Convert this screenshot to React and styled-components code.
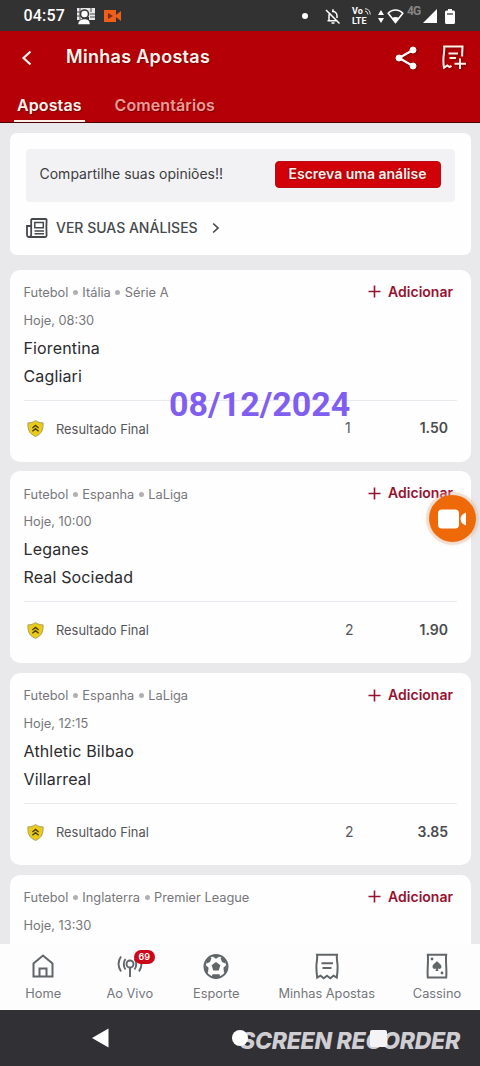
import React from 'react';
import styled, { createGlobalStyle, css } from 'styled-components';

const Global = createGlobalStyle`
  * { box-sizing: border-box; }
  html, body { margin: 0; padding: 0; }
  body { font-family: Inter, "Liberation Sans", sans-serif; background: #e9e8ea; overflow: hidden; }
  svg { display: block; flex: none; }
`;

const Screen = styled.div`
  position: relative;
  width: 480px;
  height: 1066px;
  display: flex;
  flex-direction: column;
  overflow: hidden;
  background: #e9e8ea;
`;

const StatusBar = styled.div`
  flex: none;
  height: 31px;
  padding: 1px 25px 0 23.5px;
  display: flex;
  align-items: center;
  background: #323232;
  color: #fff;
`;

const Clock = styled.span`
  font: 500 16px/30px Roboto, sans-serif;
  letter-spacing: 0.2px;
  width: 45px;
`;

const StatusLeft = styled.div`
  display: flex;
  align-items: center;
  gap: 8px;
  flex: 1;
`;

const StatusRight = styled.div`
  display: flex;
  align-items: center;
`;

const Dot = styled.i`
  width: 6px;
  height: 6px;
  border-radius: 50%;
  background: #fff;
  margin-right: 17px;
`;

const Volte = styled.div`
  margin: 0 7px 0 11px;
  width: 19px;
  font: 700 9px/10px Roboto, sans-serif;
  white-space: nowrap;
`;

const VoRow = styled.div`
  display: flex;
  align-items: center;
  gap: 1px;
`;

const NetType = styled.span`
  font: 700 12px/12px "Roboto", sans-serif;
  color: #858585;
  margin: -10px 2px 0 3px;
  width: 14px;
  letter-spacing: -0.8px;
`;

const BatteryWrap = styled.span`
  margin-left: 8px;
`;

const Header = styled.header`
  flex: none;
  height: 92px;
  background: #b40006;
  border-bottom: 1px solid #4c0003;
  color: #fff3ec;
  display: flex;
  flex-direction: column;
  text-shadow: 1px 1px 1px rgba(70, 0, 0, 0.6);
`;

const TitleRow = styled.div`
  height: 53px;
  padding: 0 14px 0 21px;
  display: flex;
  align-items: center;
`;

const Title = styled.h1`
  flex: 1;
  margin: -1px 0 0 33px;
  font-size: 18px;
  line-height: 24px;
  font-weight: 600;
  letter-spacing: 0.3px;
`;

const HeaderIcons = styled.div`
  display: flex;
  align-items: center;
  gap: 25px;
  filter: drop-shadow(1px 1px 1px rgba(70, 0, 0, 0.5));
`;

const Tabs = styled.nav`
  flex: 1;
  display: flex;
  gap: 27px;
  padding-left: 14px;
`;

const Tab = styled.div`
  height: 38px;
  padding: 0 3px;
  font-size: 16px;
  line-height: 42px;
  font-weight: 600;
  letter-spacing: 0.1px;
  color: ${(p) => (p.$active ? '#fff3ec' : '#f09a98')};
  border-bottom: 2px solid ${(p) => (p.$active ? '#fbeee6' : 'transparent')};
`;

const Feed = styled.main`
  flex: 1;
  min-height: 0;
  overflow: hidden;
  padding: 10px 9px 0 9.5px;
`;

const cardBase = css`
  background: #fefefe;
  border-radius: 10px;
`;

const PromoCard = styled.section`
  ${cardBase}
  border-radius: 7px;
  height: 122px;
  padding: 15.5px 16px 0;
  margin-bottom: 14.5px;
`;

const PromoBox = styled.div`
  height: 53.5px;
  border-radius: 4px;
  background: #f2f2f4;
  display: flex;
  align-items: center;
  justify-content: space-between;
  padding: 0 14px;
`;

const PromoText = styled.span`
  font-size: 14px;
  line-height: 20px;
  margin-top: -3px;
  color: #3c3c3f;
`;

const WriteButton = styled.button`
  width: 166px;
  height: 27px;
  margin-top: -2px;
  padding: 0 1px 1px 0;
  border: 1px solid #b80d16;
  border-radius: 4px;
  background: #d10009;
  color: #ffeeea;
  font: 600 14px/22px Inter, sans-serif;
  text-shadow: 0 0 2px rgba(90, 0, 0, 0.8);
`;

const ReviewsLink = styled.div`
  height: 52px;
  padding-left: 0.5px;
  display: flex;
  align-items: center;
  color: #46484b;
`;

const ReviewsLabel = styled.span`
  font-size: 14px;
  line-height: 20px;
  font-weight: 500;
  margin: -1px 14px 0 8px;
`;

const BetCard = styled.section`
  ${cardBase}
  height: 192px;
  margin-bottom: 9.7px;
  padding: 9px 14px 0;
  display: flex;
  flex-direction: column;
`;

const TopRow = styled.div`
  display: flex;
  align-items: center;
  justify-content: space-between;
  height: 28px;
  padding-right: 4px;
`;

const Crumbs = styled.div`
  display: flex;
  align-items: center;
  gap: 4.5px;
  font-size: 12.8px;
  color: #77777b;
`;

const Bullet = styled.i`
  width: 5px;
  height: 5px;
  border-radius: 50%;
  background: #b0b0b3;
`;

const AddLink = styled.div`
  display: flex;
  align-items: center;
  gap: 7px;
  margin-top: -1.5px;
  font-size: 14px;
  line-height: 20px;
  font-weight: 600;
  color: #991130;
`;

const Kickoff = styled.div`
  font-size: 12.8px;
  line-height: 28.5px;
  height: 27.3px;
  color: #77777b;
`;

const Team = styled.div`
  font-size: 16px;
  line-height: 28px;
  letter-spacing: 0.15px;
  color: #2b2b2e;
`;

const Divider = styled.hr`
  width: 100%;
  height: 1px;
  margin: 10px 0 0;
  border: 0;
  background: #e9e9ef;
`;

const ResultRow = styled.div`
  display: flex;
  align-items: center;
  height: 56px;
  color: #55565a;
  font-size: 12.9px;
`;

const ShieldWrap = styled.span`
  margin: 0 0 0 3px;
`;

const Market = styled.span`
  flex: 1;
  margin: 0.5px 0 0 12.5px;
`;

const Pick = styled.span`
  width: 26px;
  font-size: 14px;
  margin-top: -2px;
`;

const Odd = styled.span`
  width: 86px;
  padding-right: 9px;
  text-align: right;
  font-size: 14px;
  font-weight: 600;
  margin-top: -2px;
  color: #4a4b4f;
`;

const BottomNav = styled.nav`
  flex: none;
  height: 66px;
  background: #fdfdfe;
  display: grid;
  grid-template-columns: 86.5px 86.5px 86.5px 134.5px 86px;
`;

const NavItem = styled.div`
  display: flex;
  flex-direction: column;
  align-items: center;
  padding-top: 8px;
  font-size: 12.8px;
  line-height: 20px;
  color: #75767a;
`;

const NavGlyph = styled.div`
  position: relative;
  height: 32px;
  color: #616669;
`;

const Badge = styled.span`
  position: absolute;
  left: 17px;
  top: -2px;
  width: 21px;
  height: 14px;
  border-radius: 7px;
  background: #cb0818;
  color: #fff;
  font-size: 9px;
  line-height: 14px;
  font-weight: 600;
  text-align: center;
`;

const SystemNav = styled.div`
  position: relative;
  flex: none;
  height: 56px;
  background: #313035;
  display: flex;
  align-items: center;
  padding: 0 93px 0 91px;
  justify-content: space-between;
`;

const Watermark = styled.div`
  position: absolute;
  left: 240px;
  top: 16px;
  font: italic 800 23px/30px Inter, sans-serif;
  letter-spacing: -0.28px;
  color: #cfced2;
  white-space: nowrap;
`;

const SystemHome = styled.i`
  position: relative;
  width: 16px;
  height: 16px;
  border-radius: 50%;
  background: #fff;
`;

const SystemRecent = styled.i`
  position: relative;
  width: 17px;
  height: 17px;
  border-radius: 2px;
  background: #f4f4f6;
`;

const DateStamp = styled.div`
  position: absolute;
  left: 169px;
  top: 383px;
  font: 700 34px/42px Roboto, sans-serif;
  color: #805ff0;
`;

const RecordBubble = styled.div`
  position: absolute;
  left: 429px;
  top: 495px;
  width: 47px;
  height: 47px;
  border-radius: 50%;
  background: #ee6a08;
  box-shadow: 0 0 0 3px rgba(225, 190, 170, 0.35), 0 0 4px 2px rgba(225, 170, 130, 0.3);
  display: flex;
  align-items: center;
  padding-left: 9px;
`;

const PortraitIcon = () => (
  <svg width="18" height="17" viewBox="0 0 18 17">
    <path d="M0 0h18v12h-6V9H5v3H0z" fill="#e8e8e8" />
    <path d="M3 0v12M0 4h4M0 8h4M13 6h5M13 9h5M14 0v4" stroke="#4a4a4a" strokeWidth="1" />
    <circle cx="7.500" cy="6" r="4" fill="#fff" stroke="#3a3a3a" strokeWidth="1.600" />
    <path d="M1 16.500c0-4 3-5.500 6.500-5.500s5.500 1.500 5.500 5.500z" fill="#fff" stroke="#3a3a3a" strokeWidth=".6" />
  </svg>
);

const CamMini = () => (
  <svg width="19" height="14" viewBox="0 0 19 14">
    <path d="M1 1h12v12H1zM13 6l5-4v10l-5-4z" fill="#f05f18" />
    <path d="M5 4l5 3-5 3z" fill="#703018" />
  </svg>
);

const BellOff = () => (
  <svg width="16" height="17" viewBox="0 0 16 17" fill="none" stroke="#fff" strokeWidth="1.5">
    <path d="M4 12V7.5A4 4 0 0 1 5 5M7 3.6C10 3 12 5 12 8v2M2.500 12.700H11" />
    <path d="M8 1.300v2M1 2l13.500 13.500" />
    <path d="M6.500 15h3" />
  </svg>
);

const Arrows = () => (
  <svg width="9" height="13" viewBox="0 0 9 13" fill="#fff">
    <path d="M3 0l3 5H0zM3 13l3-5H0z" />
  </svg>
);

const Wifi = () => (
  <svg width="17" height="15" viewBox="0 0 17 15">
    <path d="M1.200 4.300C5-.1 12-.1 15.800 4.300L8.500 13.500z" fill="none" stroke="#fff" strokeWidth="1.600" />
    <path d="M5 9.200c2-1.500 5-1.500 7 0l-3.500 5z" fill="#fff" />
  </svg>
);

const Signal = () => (
  <svg width="14" height="14" viewBox="0 0 14 14"><path d="M14 0v14H0z" fill="#fff" /></svg>
);

const Battery = () => (
  <svg width="10" height="15" viewBox="0 0 10 15">
    <path d="M3 0h4v1.500h1.500Q10 1.500 10 3v10.500Q10 15 8.500 15h-7Q0 15 0 13.500V3q0-1.500 1.500-1.500H3z" fill="#fff" />
    <path d="M2 5h6" stroke="#555" strokeWidth="1.500" />
  </svg>
);

const BackIcon = () => (
  <svg width="12" height="16" viewBox="0 0 12 16" fill="none" stroke="#fff3ec" strokeWidth="2.200">
    <path d="M9.500 1.500L2.500 8l7 6.500" />
  </svg>
);

const ShareIcon = () => (
  <svg width="22" height="24" viewBox="0 0 22 24" fill="#fff" stroke="#fff">
    <path d="M18 4L4 12l14 8" fill="none" strokeWidth="2.200" />
    <circle cx="18" cy="4" r="3" /><circle cx="4" cy="12" r="3" /><circle cx="18" cy="20" r="3" />
  </svg>
);

const SlipAddIcon = () => (
  <svg width="24" height="25" viewBox="0 0 24 25" fill="none" stroke="#fff3ec" strokeWidth="2">
    <path d="M20.200 11.500c-.3-3 .3-6 .3-10H2.200C3 6 1 10 1.400 16.500c0 2 .2 4 .6 6.300l3.200-2.300 2.300 1.600 2-1.300" />
    <path d="M6.500 8.500h9.500M7.500 13h6.500M18 13.500v10.500M12.500 18.800H24" />
  </svg>
);

const NewsIcon = () => (
  <svg width="22" height="20" viewBox="0 0 22 20" fill="none" stroke="currentColor" strokeWidth="1.800">
    <path d="M5.200 1h14.500q1 0 .9 1-.5 7 0 15.500 0 1.500-1.500 1.500H3.200Q1 19 1 16.500V8h4.200M5.200 1v15.500Q5 19 3.200 19" />
    <path d="M8.800 4.500h8.500v5.300H8.800zM8.500 13h9.500M8.500 15.800h9.500" strokeWidth="1.500" />
  </svg>
);

const ChevronIcon = () => (
  <svg width="8" height="12" viewBox="0 0 8 12" fill="none" stroke="currentColor" strokeWidth="1.700">
    <path d="M1.200 1.500L6 6l-4.800 4.500" />
  </svg>
);

const PlusIcon = () => (
  <svg width="13" height="13" viewBox="0 0 13 13" fill="none" stroke="currentColor" strokeWidth="1.600">
    <path d="M6.500 .5v12M.5 6.500h12" />
  </svg>
);

const ShieldIcon = () => (
  <svg width="17" height="17" viewBox="0 0 17 17">
    <path d="M8.500.6c2.300 1.700 4.700 2.300 7.600 2.300 0 6-.5 10.500-7.600 13.500C1.400 13.400.9 8.900.9 2.900 3.800 2.900 6.200 2.300 8.500.6z" fill="#e9cb18" stroke="#a8a366" strokeWidth="1" />
    <path d="M5.400 8l3.100-2.500L11.600 8M5.400 11.200l3.100-2.500 3.100 2.500" fill="none" stroke="#4b3a13" strokeWidth="1.400" />
  </svg>
);

const HomeIcon = () => (
  <svg width="22" height="26" viewBox="0 0 22 26" fill="none" stroke="currentColor" strokeWidth="2">
    <path d="M1.500 24.500v-13L11 3.500l9.500 8v13z" /><path d="M7.500 24v-7.500h7V24" />
  </svg>
);

const LiveIcon = () => (
  <svg width="26" height="26" viewBox="0 0 26 26" fill="none" stroke="currentColor" strokeWidth="1.900">
    <circle cx="13" cy="12" r="3.500" /><path d="M13 15.500v9.500M8.500 7c-2.300 3-2.300 7.500 0 10.500M17.500 7c2.300 3 2.300 7.500 0 10.500M4 4.500c-3.300 5-3.300 10 0 15M22 4.500c3.300 5 3.300 10 0 15" />
  </svg>
);

const BallIcon = () => (
  <svg width="26" height="28" viewBox="0 0 26 28">
    <circle cx="13" cy="14.500" r="11.500" fill="none" stroke="currentColor" strokeWidth="2" />
    <path d="M13 10l4.400 3.200-1.700 5.200h-5.400l-1.700-5.200zM8.500 3.800h9L13 6.800zM2 12.500l3.600 3.200-.6 4.800-2 .2zM24 12.500l-3.600 3.200.6 4.800 2 .2zM9.500 22.300h7l1 3h-9zM3 9.500l3.500-4 2 .5L7 10l-3.500 1.500zM23 9.500l-3.500-4-2 .5L19 10l3.500 1.500z" fill="currentColor" />
  </svg>
);

const SlipIcon = () => (
  <svg width="24" height="28" viewBox="0 0 24 28" fill="none" stroke="currentColor" strokeWidth="2">
    <path d="M2 2.700h20c-1 4 .8 7 .6 12.500 0 4-.3 6.500-.8 10.500l-3.300-2-3.200 2.500-3.300-2.500-3.300 2.500-3.200-2.500-3.300 2C1.700 21.700 1.400 19 1.400 15.200 1.200 9.700 3 6.700 2 2.700z" />
    <path d="M6.500 11.300h11.500M7.500 16h9" />
  </svg>
);

const CardIcon = () => (
  <svg width="22" height="28" viewBox="0 0 22 28">
    <path d="M1.800 2.700h18.400c-.8 7 .8 15 0 22.800H1.800c-.8-7.800.8-15.800 0-22.800z" fill="none" stroke="currentColor" strokeWidth="2" />
    <path d="M11 9c1.500 2 4.500 3.300 4.500 5.800 0 2-2.300 2.800-3.700 1.500l.7 2.700h-3l.7-2.700c-1.400 1.300-3.700.5-3.700-1.500C6.500 12.300 9.500 11 11 9z" fill="currentColor" />
    <circle cx="6" cy="7" r="1.400" fill="currentColor" /><circle cx="16" cy="21" r="1.400" fill="currentColor" />
  </svg>
);

const bets = [
  { league: ['Futebol', 'Itália', 'Série A'], time: 'Hoje, 08:30', home: 'Fiorentina', away: 'Cagliari', pick: '1', odd: '1.50' },
  { league: ['Futebol', 'Espanha', 'LaLiga'], time: 'Hoje, 10:00', home: 'Leganes', away: 'Real Sociedad', pick: '2', odd: '1.90' },
  { league: ['Futebol', 'Espanha', 'LaLiga'], time: 'Hoje, 12:15', home: 'Athletic Bilbao', away: 'Villarreal', pick: '2', odd: '3.85' },
  { league: ['Futebol', 'Inglaterra', 'Premier League'], time: 'Hoje, 13:30' },
];

const Bet = ({ league, time, home, away, pick, odd }) => (
  <BetCard>
    <TopRow>
      <Crumbs>
        {league.map((part, i) => (
          <React.Fragment key={part}>
            {i > 0 && <Bullet />}
            <span>{part}</span>
          </React.Fragment>
        ))}
      </Crumbs>
      <AddLink><PlusIcon />Adicionar</AddLink>
    </TopRow>
    <Kickoff>{time}</Kickoff>
    {home && (
      <>
        <Team>{home}</Team>
        <Team>{away}</Team>
        <Divider />
        <ResultRow>
          <ShieldWrap><ShieldIcon /></ShieldWrap>
          <Market>Resultado Final</Market>
          <Pick>{pick}</Pick>
          <Odd>{odd}</Odd>
        </ResultRow>
      </>
    )}
  </BetCard>
);

export default function App() {
  return (
    <>
      <Global />
      <Screen>
        <StatusBar>
          <StatusLeft>
            <Clock>04:57</Clock>
            <PortraitIcon />
            <CamMini />
          </StatusLeft>
          <StatusRight>
            <Dot />
            <BellOff />
            <Volte>
              <VoRow>
                Vo
                <svg width="7" height="7" viewBox="0 0 7 7" fill="none" stroke="#ddd"><path d="M1 .7q5 .3 5.300 5.800M1 3q2.500.3 3 3.500" /></svg>
              </VoRow>
              LTE
            </Volte>
            <Arrows />
            <Wifi />
            <NetType>4G</NetType>
            <Signal />
            <BatteryWrap><Battery /></BatteryWrap>
          </StatusRight>
        </StatusBar>

        <Header>
          <TitleRow>
            <BackIcon />
            <Title>Minhas Apostas</Title>
            <HeaderIcons>
              <ShareIcon />
              <SlipAddIcon />
            </HeaderIcons>
          </TitleRow>
          <Tabs>
            <Tab $active>Apostas</Tab>
            <Tab>Comentários</Tab>
          </Tabs>
        </Header>

        <Feed>
          <PromoCard>
            <PromoBox>
              <PromoText>Compartilhe suas opiniões!!</PromoText>
              <WriteButton>Escreva uma análise</WriteButton>
            </PromoBox>
            <ReviewsLink>
              <NewsIcon />
              <ReviewsLabel>VER SUAS ANÁLISES</ReviewsLabel>
              <ChevronIcon />
            </ReviewsLink>
          </PromoCard>
          {bets.map((b) => <Bet key={b.time} {...b} />)}
        </Feed>

        <BottomNav>
          <NavItem><NavGlyph><HomeIcon /></NavGlyph>Home</NavItem>
          <NavItem><NavGlyph><LiveIcon /><Badge>69</Badge></NavGlyph>Ao Vivo</NavItem>
          <NavItem><NavGlyph><BallIcon /></NavGlyph>Esporte</NavItem>
          <NavItem><NavGlyph><SlipIcon /></NavGlyph>Minhas Apostas</NavItem>
          <NavItem><NavGlyph><CardIcon /></NavGlyph>Cassino</NavItem>
        </BottomNav>

        <SystemNav>
          <svg width="18" height="20" viewBox="0 0 18 20"><path d="M17.500.5v19L1 10z" fill="#fff" /></svg>
          <Watermark>SCREEN RECORDER</Watermark>
          <SystemHome />
          <SystemRecent />
        </SystemNav>

        <DateStamp>08/12/2024</DateStamp>
        <RecordBubble>
          <svg width="29" height="20" viewBox="0 0 29 20" fill="#fff">
            <rect x="0" y="0.500" width="21" height="19" rx="4" />
            <path d="M28 3.500v13q-5.500-2-5.500-6.500T28 3.500z" />
          </svg>
        </RecordBubble>
      </Screen>
    </>
  );
}
